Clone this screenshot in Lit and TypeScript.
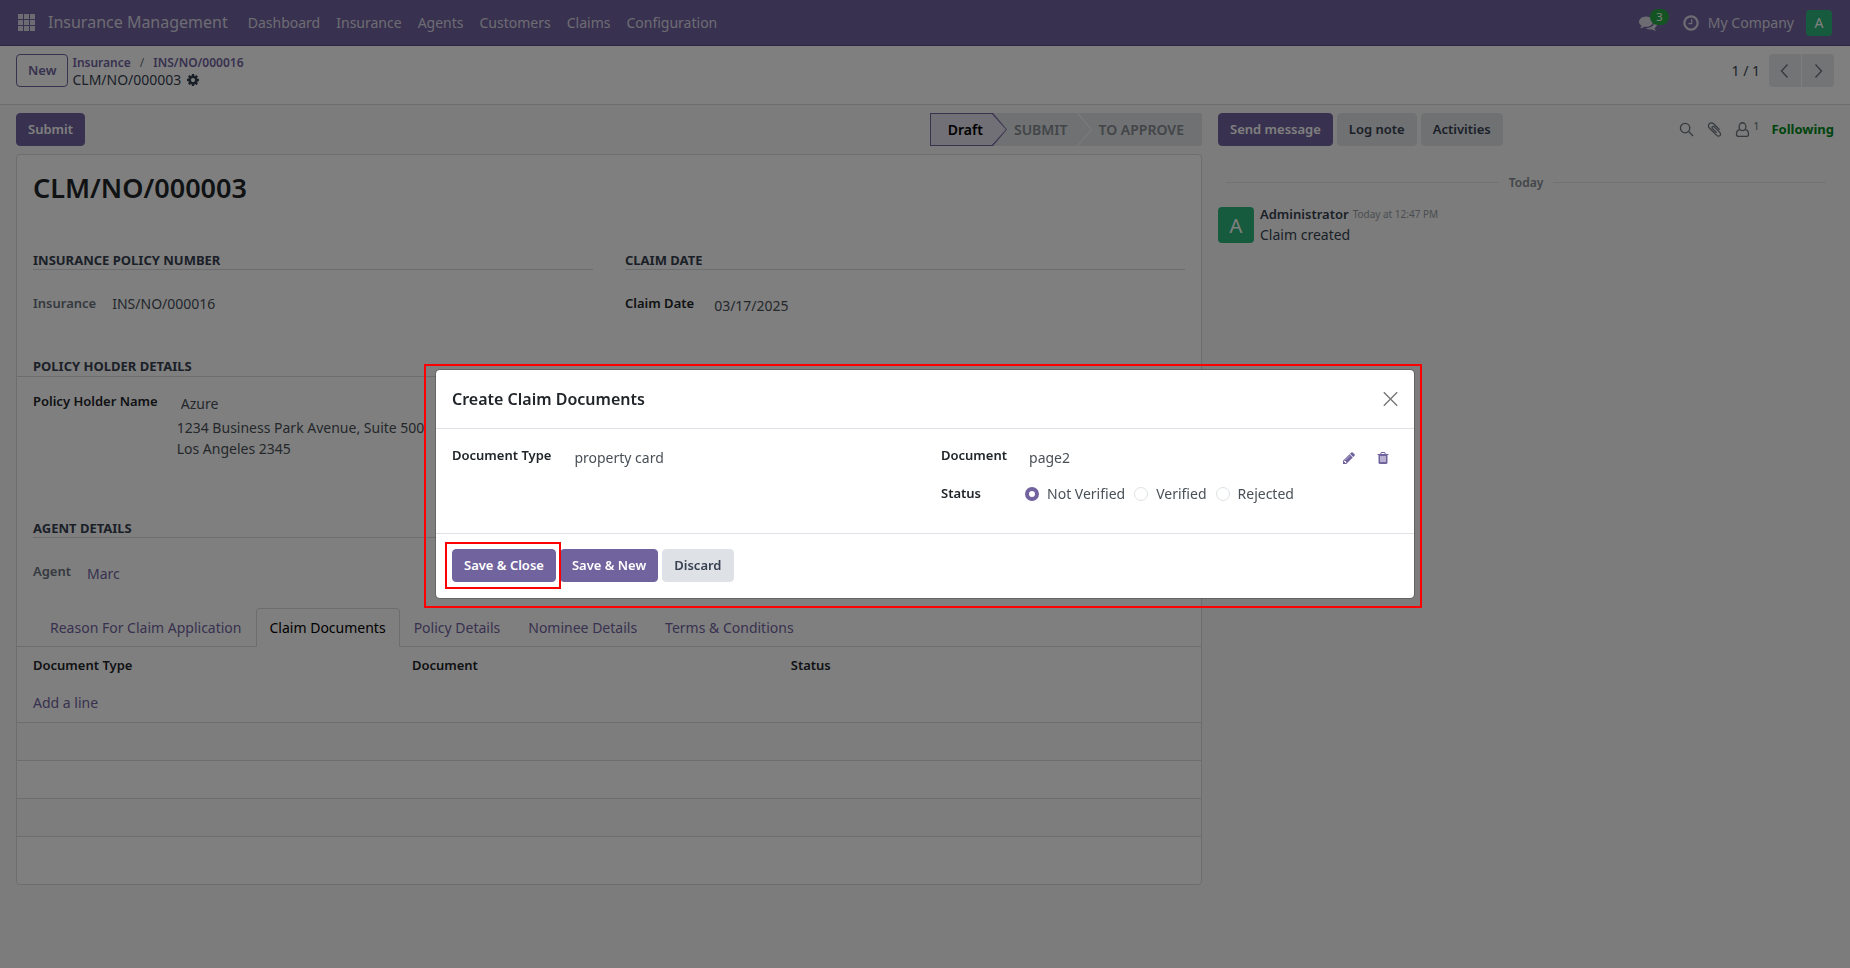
import { LitElement, html, css, svg } from "lit";
import { customElement, property } from "lit/decorators.js";

const PATHS: Record<string, string> = {
  pencil:
    "M491 1536l91-91-235-235-91 91v107h128v128h107zm523-928q0-22-22-22-10 0-17 7l-542 542q-7 7-7 17 0 22 22 22 10 0 17-7l542-542q7-7 7-17zm-54-192l416 416-832 832h-416v-416zm683 96q0 53-37 90l-166 166-416-416 166-165q36-38 90-38 53 0 91 38l235 234q37 39 37 91z",
  cog: "M1152 896q0-106-75-181t-181-75-181 75-75 181 75 181 181 75 181-75 75-181zm512-109v222q0 12-8 23t-20 13l-185 28q-19 54-39 91 35 50 107 138 10 12 10 25t-9 23q-27 37-99 108t-94 71q-12 0-26-9l-138-108q-44 23-91 38-16 136-29 186-7 28-36 28h-222q-14 0-24.5-8.5t-11.5-21.5l-28-184q-49-16-90-37l-141 107q-10 9-25 9-14 0-25-11-126-114-165-168-7-10-7-23 0-12 8-23 15-21 51-66.5t54-70.5q-27-50-41-99l-183-27q-13-2-21-12.5t-8-23.5v-222q0-12 8-23t19-13l186-28q14-46 39-92-40-57-107-138-10-12-10-24 0-10 9-23 26-36 98.5-107.5t94.5-71.5q13 0 26 10l138 107q44-23 91-38 16-136 29-186 7-28 36-28h222q14 0 24.5 8.5t11.5 21.5l28 184q49 16 90 37l142-107q9-9 24-9 13 0 25 10 129 119 165 170 7 8 7 22 0 12-8 23-15 21-51 66.5t-54 70.5q26 50 41 98l183 28q13 2 21 12.5t8 23.5z",
  comments:
    "M1408 768q0 139-94 257t-256.5 186.5-353.5 68.5q-86 0-176-16-124 88-278 128-36 9-86 16h-3q-11 0-20.5-8t-11.5-21q-1-3-1-6.5t.5-6.5 2-6l2.5-5 3.5-5.5 4-5 4.5-5 4-4.5q5-6 23-25t26-29.5 22.5-29 25-38.5 20.5-44q-124-72-195-177t-71-224q0-139 94-257t256.5-186.5 353.5-68.5 353.5 68.5 256.5 186.5 94 257zm384 256q0 120-71 224.5t-195 176.5q10 24 20.5 44t25 38.5 22.5 29 26 29.5 23 25q1 1 4 4.5t4.5 5 4 5 3.5 5.5l2.5 5 2 6 .5 6.5-1 6.5q-3 14-13 22t-22 7q-50-7-86-16-154-40-278-128-90 16-176 16-271 0-472-132 58 4 88 4 161 0 309-45t264-129q125-92 192-212t67-254q0-77-23-152 129 71 204 178t75 230z",
  clock:
    "M1024 544v448q0 14-9 23t-23 9h-320q-14 0-23-9t-9-23v-64q0-14 9-23t23-9h224v-352q0-14 9-23t23-9h64q14 0 23 9t9 23zm416 352q0-148-73-273t-198-198-273-73-273 73-198 198-73 273 73 273 198 198 273 73 273-73 198-198 73-273zm224 0q0 209-103 385.5t-279.5 279.5-385.5 103-385.5-103-279.5-279.5-103-385.5 103-385.5 279.5-279.5 385.5-103 385.5 103 279.5 279.5 103 385.5z",
  clip: "M1596 1385q0 117-79 196t-196 79q-135 0-235-100l-777-776q-113-115-113-271 0-159 110-270t269-111q158 0 273 113l605 606q10 10 10 22 0 16-30.5 46.5t-46.5 30.5q-13 0-23-10l-606-607q-79-77-181-77-106 0-179 75t-73 181q0 105 76 181l776 777q63 63 145 63 64 0 106-42t42-106q0-82-63-145l-581-581q-26-24-60-24-29 0-48 19t-19 48q0 32 25 59l410 410q10 10 10 22 0 16-31 47t-47 31q-12 0-22-10l-410-410q-63-61-63-149 0-82 57-139t139-57q88 0 149 63l581 581q100 98 100 235z",
  trash:
    "M704 1376v-704q0-14-9-23t-23-9h-64q-14 0-23 9t-9 23v704q0 14 9 23t23 9h64q14 0 23-9t9-23zm256 0v-704q0-14-9-23t-23-9h-64q-14 0-23 9t-9 23v704q0 14 9 23t23 9h64q14 0 23-9t9-23zm256 0v-704q0-14-9-23t-23-9h-64q-14 0-23 9t-9 23v704q0 14 9 23t23 9h64q14 0 23-9t9-23zm-544-992h448l-48-117q-7-9-17-11h-317q-10 2-17 11zm928 32v64q0 14-9 23t-23 9h-96v948q0 83-47 143.5t-113 60.5h-832q-66 0-113-58.5t-47-141.5v-952h-96q-14 0-23-9t-9-23v-64q0-14 9-23t23-9h309l70-167q15-37 54-63t79-26h320q40 0 79 26t54 63l70 167h309q14 0 23 9t9 23z",
};

const STROKES: Record<string, unknown> = {
  search: svg`<circle cx="6.5" cy="6.5" r="5"></circle><path d="M10.2 10.2L15 15"></path>`,
  user: svg`<ellipse cx="8" cy="5" rx="3.6" ry="4.2"></ellipse><path d="M5 8.2C2.6 8.6 1.6 10.6 1.6 13c0 1.4.8 2.3 2.2 2.3h8.400c1.400 0 2.200-.9 2.200-2.300 0-2.400-1-4.400-3.400-4.800"></path>`,
  left: svg`<path d="M10.500 1.500L4.500 8l6 6.500"></path>`,
  right: svg`<path d="M5.500 1.500l6 6.500-6 6.500"></path>`,
  close: svg`<path d="M1.800 1.300l13.400 13.400M15.200 1.300L1.800 14.700"></path>`,
};

@customElement("ui-icon")
export class UiIcon extends LitElement {
  @property() name = "";
  @property({ type: Number }) size = 14;

  static styles = css`
    :host {
      display: inline-flex;
      flex: none;
    }
    .fill {
      fill: currentColor;
    }
    .line {
      fill: none;
      stroke: currentColor;
      stroke-width: 1.4;
    }
  `;

  render() {
    const s = this.size;
    if (this.name === "apps") {
      return html`<svg class="fill" width=${s} height=${s} viewBox="0 0 17 17" aria-hidden="true">
        ${[0, 6, 12].map((y) => [0, 6, 12].map((x) => svg`<rect x=${x} y=${y} width="5" height="5"></rect>`))}
      </svg>`;
    }
    if (PATHS[this.name]) {
      return html`<svg class="fill" width=${s} height=${s} viewBox="0 0 1792 1792" aria-hidden="true">
        <path d=${PATHS[this.name]}></path>
      </svg>`;
    }
    return html`<svg class="line" width=${s} height=${s} viewBox="0 0 16 16" aria-hidden="true">
      ${STROKES[this.name]}
    </svg>`;
  }
}

@customElement("app-root")
export class AppRoot extends LitElement {
  static styles = css`
    :host {
      display: block;
      min-height: 100vh;
      background: #f6f9f7;
      color: #374151;
      font: 14px/21px "Noto Sans", "Open Sans", sans-serif;
      --brand: #71639e;
      --line: #d8dadd;
      --ink: #212529;
    }
    * {
      box-sizing: border-box;
    }
    a {
      color: inherit;
      text-decoration: none;
    }
    button,
    input {
      font: inherit;
      color: inherit;
      margin: 0;
    }
    h1,
    h2,
    p {
      margin: 0;
      font-weight: 600;
    }
    button {
      display: flex;
      align-items: center;
      border: 0;
      padding: 0;
      background: none;
    }
    .btn {
      border: 1px solid #dee2e6;
      border-radius: 4px;
      padding: 5px 11px;
      background: #dee2e6;
      font-size: 13px;
      font-weight: 600;
      white-space: nowrap;
    }
    .btn.primary {
      background: var(--brand);
      border-color: var(--brand);
      color: #fff;
    }
    .btn.outline {
      background: #fff;
      border-color: var(--brand);
      color: var(--brand);
    }

    .navbar {
      display: flex;
      align-items: center;
      height: 46px;
      padding: 0 18px;
      background: var(--brand);
      border-bottom: 1px solid #5a4f7f;
      color: #dcd8e6;
    }
    .brand {
      margin: 0 12px 0 13px;
      font-size: 16px;
    }
    .menu {
      display: flex;
      flex: 1;
    }
    .menu a {
      padding: 0 8px;
    }
    .systray {
      display: flex;
      align-items: center;
      gap: 8px;
    }
    .chat {
      position: relative;
      margin-right: 17px;
    }
    .badge {
      position: absolute;
      left: 11px;
      top: -5px;
      min-width: 19px;
      border-radius: 8px;
      background: #28a745;
      color: #fff;
      font-size: 11px;
      line-height: 16px;
      text-align: center;
    }
    .avatar {
      display: flex;
      align-items: center;
      justify-content: center;
      flex: none;
      width: 26px;
      height: 26px;
      border-radius: 4px;
      background: #2fb67c;
      color: #fff;
    }
    .systray .avatar {
      margin-left: 4px;
    }
    .avatar.large {
      width: 36px;
      height: 36px;
      font-size: 20px;
    }

    .panel {
      display: flex;
      align-items: flex-start;
      gap: 4px;
      padding: 8px 16px 16px;
      background: #fff;
      border-bottom: 1px solid var(--line);
    }
    .crumbs {
      flex: 1;
      line-height: 17px;
    }
    .trail {
      display: flex;
      gap: 9px;
      font-size: 12px;
      font-weight: 600;
      color: var(--brand);
    }
    .trail span {
      color: #6c757d;
      font-weight: 400;
    }
    .current {
      display: flex;
      align-items: center;
      gap: 5px;
    }
    .pager {
      display: flex;
      align-items: center;
      gap: 9px;
    }
    .pager div {
      display: flex;
      gap: 1px;
      border-radius: 4px;
      overflow: hidden;
    }
    .pager button {
      justify-content: center;
      width: 32px;
      height: 33px;
      background: #e7e9ed;
      color: #6c757d;
    }

    .content {
      display: grid;
      grid-template-columns: 1186fr 616fr;
      gap: 16px;
      padding: 8px 16px;
    }
    .bar {
      display: flex;
      justify-content: space-between;
      margin-bottom: 8px;
    }
    .steps {
      display: flex;
      border-radius: 0 2px 2px 0;
      overflow: hidden;
    }
    .steps button {
      height: 33px;
      margin-left: -14px;
      padding: 0 18px 0 21px;
      background: #dee2e6;
      color: #868b90;
      font-weight: 600;
      text-transform: uppercase;
    }
    .steps .mid {
      padding-right: 24px;
    }
    .steps .sep {
      z-index: 1;
      width: 15px;
      height: 33px;
      margin-left: -15px;
      fill: none;
      stroke: #fff;
    }
    .steps .first,
    .steps .first::before {
      clip-path: polygon(0 0, calc(100% - 14px) 0, 100% 50%, calc(100% - 14px) 100%, 0 100%);
    }
    .steps .first {
      position: relative;
      z-index: 2;
      margin: 0;
      padding: 0 24px 0 18px;
      background: var(--brand);
      color: #000;
      text-transform: none;
    }
    .steps .first::before {
      content: "";
      position: absolute;
      z-index: -1;
      inset: 1px;
      background: #e3e0ec;
    }

    .sheet {
      padding: 16px 0 0;
      background: #fff;
      border: 1px solid var(--line);
      border-radius: 4px;
    }
    .sheet h1 {
      margin: 0 16px 46px;
      font-size: 27px;
      line-height: 34px;
      color: var(--ink);
    }
    .cols {
      display: grid;
      grid-template-columns: minmax(0, 1fr) minmax(0, 1fr);
      gap: 32px;
      padding: 0 16px;
    }
    .section {
      margin-bottom: 23px;
      border-bottom: 1px solid var(--line);
      font-size: 13px;
      line-height: 18px;
      font-weight: 700;
      text-transform: uppercase;
    }
    .section.wide {
      margin-bottom: 14px;
      padding: 0 16px 1px;
    }
    .row {
      display: flex;
      gap: 16px;
      color: #495057;
    }
    .row > label,
    .row .label {
      font-size: 13px;
      font-weight: 600;
      color: var(--ink);
      white-space: nowrap;
    }
    .row > .soft {
      color: #6b7280;
    }
    .row input[type="text"] {
      flex: 1;
      min-width: 0;
      height: 25px;
      padding: 0 4px;
      border: 0;
      background: none;
    }
    .holder {
      display: grid;
      gap: 1px;
      flex: 1;
    }
    .holder input[type="text"] {
      width: 280px;
    }
    .first-group {
      margin-bottom: 39px;
    }
    .holder-row {
      gap: 19px;
      margin-bottom: 60px;
      padding: 0 16px;
    }
    .link,
    .row input.link {
      color: var(--brand);
    }
    .agent-row {
      margin-bottom: 22px;
    }
    .row input[type="text"].flush {
      padding: 0;
    }

    .tabs {
      display: flex;
      padding: 0 19px;
      border-bottom: 1px solid var(--line);
    }
    .tabs button {
      height: 39px;
      margin-bottom: -1px;
      padding: 0 13px;
      border: 1px solid transparent;
      border-radius: 4px 4px 0 0;
      color: var(--brand);
      white-space: nowrap;
    }
    .tabs button.active {
      border-color: var(--line) var(--line) #fff;
      background: #fff;
      color: #000;
    }
    table {
      width: 100%;
      border-collapse: collapse;
      table-layout: fixed;
    }
    th,
    td {
      height: 38px;
      padding: 0 0 0 16px;
      text-align: left;
    }
    th {
      height: 37px;
      font-size: 13px;
      font-weight: 600;
      color: var(--ink);
    }
    th:first-child,
    th:nth-child(2) {
      width: 32%;
    }
    tbody tr {
      border-bottom: 1px solid var(--line);
    }
    tbody tr:nth-child(even) {
      background: #fafafa;
    }
    tbody tr:last-child {
      border: 0;
    }
    tbody tr:last-child td {
      height: 48px;
    }

    .tools {
      display: flex;
      align-items: center;
      gap: 4px;
    }
    .tools .right {
      display: flex;
      align-items: center;
      gap: 12px;
      margin-left: auto;
      color: #6c757d;
    }
    .followers {
      gap: 3px;
    }
    .followers sup {
      align-self: flex-start;
      font-size: 11px;
      line-height: 8px;
    }
    .following {
      color: #00881a;
      font-size: 13px;
      font-weight: 700;
    }
    .day {
      display: flex;
      align-items: center;
      gap: 10px;
      margin: 26px 8px 14px;
      font-size: 12px;
      font-weight: 600;
      color: #858b93;
    }
    .day::before,
    .day::after {
      content: "";
      flex: 1;
      border-top: 1px solid #e2e5e8;
    }
    .message {
      display: flex;
      gap: 6px;
    }
    .author {
      display: flex;
      gap: 4px;
      line-height: 15px;
      font-size: 13px;
    }
    .author strong {
      font-weight: 600;
    }
    .author time {
      font-size: 10px;
      color: #969ba3;
    }
    .message p {
      margin-top: 2px;
      font-weight: 400;
    }

    .backdrop {
      position: fixed;
      inset: 0;
      z-index: 10;
      display: flex;
      align-items: center;
      justify-content: center;
      background: rgba(0, 0, 0, 0.5);
    }
    .modal {
      position: relative;
      width: 980px;
      max-width: 100%;
      border: 1px solid rgba(0, 0, 0, 0.2);
      border-radius: 5px;
      background: #fff;
      background-clip: padding-box;
    }
    .mark {
      position: absolute;
      border: 2px solid #f00;
      pointer-events: none;
    }
    .mark.outer {
      inset: -6px -8px -10px -12px;
    }
    .mark.inner {
      inset: -7px -5px -7px -7px;
    }
    .modal header {
      display: flex;
      align-items: center;
      justify-content: space-between;
      height: 59px;
      padding: 0 16px;
      border-bottom: 1px solid #dee2e6;
    }
    .modal h2 {
      font-size: 16px;
      color: var(--ink);
    }
    .close {
      color: #777;
    }
    .form {
      padding: 16px 16px 29px;
    }
    .form > .row {
      gap: 19px;
    }
    .form > .stack {
      display: grid;
      grid-template-columns: max-content 1fr;
      gap: 13px 18px;
    }
    .form .stack .row {
      gap: 0;
    }
    .actions {
      display: flex;
      gap: 20px;
      padding-right: 8px;
      color: var(--brand);
    }
    .radios {
      display: flex;
      gap: 9px;
    }
    .radios label {
      display: flex;
      align-items: center;
      gap: 8px;
    }
    .radios input {
      appearance: none;
      width: 14px;
      height: 14px;
      border: 1px solid #dee2e6;
      border-radius: 50%;
      background: #fff;
    }
    .radios input:checked {
      border: 4px solid var(--brand);
    }
    .modal footer {
      display: flex;
      gap: 4px;
      padding: 15px 16px 16px;
      border-top: 1px solid #dee2e6;
    }
    .save {
      position: relative;
      z-index: 1;
      display: flex;
    }
  `;

  private menu = ["Dashboard", "Insurance", "Agents", "Customers", "Claims", "Configuration"];
  private tabs = [
    "Reason For Claim Application",
    "Claim Documents",
    "Policy Details",
    "Nominee Details",
    "Terms & Conditions",
  ];
  private states = ["Not Verified", "Verified", "Rejected"];

  private navbar() {
    return html`<nav class="navbar">
      <button aria-label="Apps"><ui-icon name="apps" size="17"></ui-icon></button>
      <a class="brand" href="#">Insurance Management</a>
      <div class="menu">${this.menu.map((m) => html`<a href="#">${m}</a>`)}</div>
      <div class="systray">
        <button class="chat" aria-label="Messages">
          <ui-icon name="comments" size="18"></ui-icon><span class="badge">3</span>
        </button>
        <button aria-label="Activities"><ui-icon name="clock" size="18"></ui-icon></button>
        <a href="#">My Company</a>
        <span class="avatar">A</span>
      </div>
    </nav>`;
  }

  private form() {
    return html`<main>
      <div class="bar">
        <button class="btn primary">Submit</button>
        <div class="steps">
          <button class="first">Draft</button>
          <button class="mid">Submit</button>
          <svg class="sep" viewBox="0 0 15 33" aria-hidden="true"><path d="M0.500 0L14.500 16.500L0.500 33"></path></svg>
          <button>To approve</button>
        </div>
      </div>
      <div class="sheet">
        <h1>CLM/NO/000003</h1>
        <div class="cols first-group">
          <div>
            <h2 class="section">Insurance Policy Number</h2>
            <div class="row"><span class="label soft">Insurance</span><a href="#">INS/NO/000016</a></div>
          </div>
          <div>
            <h2 class="section">Claim Date</h2>
            <div class="row">
              <label for="date">Claim Date</label><input id="date" type="text" value="03/17/2025" />
            </div>
          </div>
        </div>
        <h2 class="section wide">Policy Holder Details</h2>
        <div class="row holder-row">
          <label for="holder">Policy Holder Name</label>
          <div class="holder">
            <input id="holder" type="text" value="Azure" />
            <div>1234 Business Park Avenue, Suite 500<br />Los Angeles 2345</div>
          </div>
        </div>
        <div class="cols">
          <div>
            <h2 class="section">Agent Details</h2>
            <div class="row agent-row">
              <label class="soft" for="agent">Agent</label>
              <input id="agent" class="link flush" type="text" value="Marc" />
            </div>
          </div>
        </div>
        <div class="tabs" role="tablist">
          ${this.tabs.map(
            (t, i) => html`<button role="tab" class=${i === 1 ? "active" : ""} aria-selected=${i === 1}>${t}</button>`
          )}
        </div>
        <table>
          <thead>
            <tr>
              <th>Document Type</th>
              <th>Document</th>
              <th>Status</th>
            </tr>
          </thead>
          <tbody>
            <tr>
              <td colspan="3"><a class="link" href="#">Add a line</a></td>
            </tr>
            ${[1, 2, 3, 4].map(() => html`<tr><td colspan="3"></td></tr>`)}
          </tbody>
        </table>
      </div>
    </main>`;
  }

  private chatter() {
    return html`<aside>
      <div class="tools">
        <button class="btn primary">Send message</button>
        <button class="btn">Log note</button>
        <button class="btn">Activities</button>
        <div class="right">
          <button aria-label="Search"><ui-icon name="search" size="15"></ui-icon></button>
          <button aria-label="Attach files"><ui-icon name="clip" size="17"></ui-icon></button>
          <button class="followers" aria-label="Followers"><ui-icon name="user" size="15"></ui-icon><sup>1</sup></button>
          <button class="following">Following</button>
        </div>
      </div>
      <div class="day">Today</div>
      <article class="message">
        <span class="avatar large">A</span>
        <div>
          <div class="author"><strong>Administrator</strong><time>Today at 12:47 PM</time></div>
          <p>Claim created</p>
        </div>
      </article>
    </aside>`;
  }

  private dialog() {
    return html`<div class="backdrop">
      <div class="modal" role="dialog" aria-modal="true" aria-labelledby="title">
        <header>
          <h2 id="title">Create Claim Documents</h2>
          <button class="close" aria-label="Close"><ui-icon name="close" size="16"></ui-icon></button>
        </header>
        <div class="cols form">
          <div class="row">
            <label for="type">Document Type</label><input id="type" type="text" value="property card" />
          </div>
          <div class="row stack">
            <label for="doc">Document</label>
            <div class="row">
              <input id="doc" type="text" value="page2" />
              <div class="actions">
                <button aria-label="Edit"><ui-icon name="pencil" size="14"></ui-icon></button>
                <button aria-label="Delete"><ui-icon name="trash" size="14"></ui-icon></button>
              </div>
            </div>
            <span class="label" id="status">Status</span>
            <div class="radios" role="radiogroup" aria-labelledby="status">
              ${this.states.map(
                (s, i) => html`<label><input type="radio" name="status" ?checked=${i === 0} />${s}</label>`
              )}
            </div>
          </div>
        </div>
        <footer>
          <div class="save">
            <button class="btn primary">Save &amp; Close</button>
            <span class="mark inner"></span>
          </div>
          <button class="btn primary">Save &amp; New</button>
          <button class="btn">Discard</button>
        </footer>
        <span class="mark outer"></span>
      </div>
    </div>`;
  }

  render() {
    return html`${this.navbar()}
      <div class="panel">
        <button class="btn outline">New</button>
        <div class="crumbs">
          <div class="trail"><a href="#">Insurance</a><span>/</span><a href="#">INS/NO/000016</a></div>
          <div class="current">CLM/NO/000003 <ui-icon name="cog" size="14"></ui-icon></div>
        </div>
        <div class="pager">
          <span>1 / 1</span>
          <div>
            <button aria-label="Previous"><ui-icon name="left" size="16"></ui-icon></button>
            <button aria-label="Next"><ui-icon name="right" size="16"></ui-icon></button>
          </div>
        </div>
      </div>
      <div class="content">${this.form()}${this.chatter()}</div>
      ${this.dialog()}`;
  }
}
